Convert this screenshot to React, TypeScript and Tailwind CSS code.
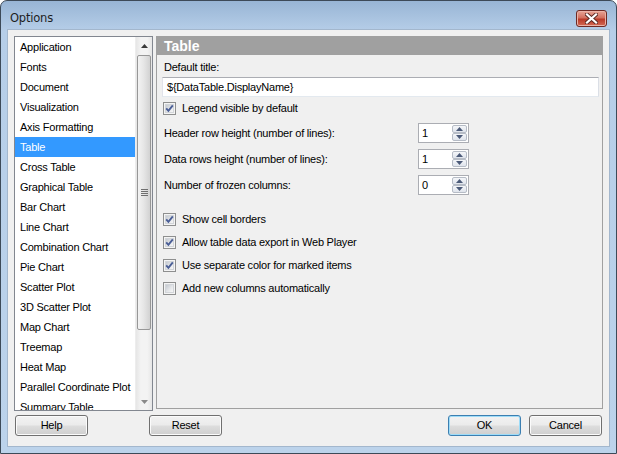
import React from "react";

const items = [
  "Application",
  "Fonts",
  "Document",
  "Visualization",
  "Axis Formatting",
  "Table",
  "Cross Table",
  "Graphical Table",
  "Bar Chart",
  "Line Chart",
  "Combination Chart",
  "Pie Chart",
  "Scatter Plot",
  "3D Scatter Plot",
  "Map Chart",
  "Treemap",
  "Heat Map",
  "Parallel Coordinate Plot",
  "Summary Table",
];

function Check({ checked }: { checked: boolean }) {
  return (
    <span className="relative block w-[13px] h-[13px] shrink-0 border border-[#8e8f8f] bg-[#f4f4f4]">
      <span className="absolute left-[1px] top-[1px] w-[9px] h-[9px] bg-[linear-gradient(135deg,#c4c9d0_0%,#e4e6e9_55%,#f6f6f6_100%)] border border-[#d2d5d9]" />
      {checked && (
        <svg className="absolute left-0 top-0" width="11" height="11" viewBox="0 0 11 11">
          <polyline points="2.2,5.3 4.4,7.8 8.8,2.4" fill="none" stroke="#4a5e96" strokeWidth="1.9" />
        </svg>
      )}
    </span>
  );
}

function CheckRow({ checked, label, className = "" }: { checked: boolean; label: string; className?: string }) {
  return (
    <div className={`flex items-center h-[23px] pl-[1px] ${className}`}>
      <Check checked={checked} />
      <span className="ml-[6px]">{label}</span>
    </div>
  );
}

function Spin({ value }: { value: string }) {
  return (
    <div className="flex w-[51px] h-[20px] border border-[#abadb3] bg-white">
      <div className="flex-1 pl-[3px] leading-[18px]">{value}</div>
      <div className="w-[16px] flex flex-col py-[1px] pr-[1px]">
        <div className="flex-1 flex items-center justify-center border border-[#b6bcc6] rounded-[2px] bg-[linear-gradient(#f4f6f9,#dfe4ec)]">
          <svg width="7" height="4" viewBox="0 0 7 4">
            <polygon points="0,4 7,4 3.5,0" fill="#4b5a78" />
          </svg>
        </div>
        <div className="flex-1 flex items-center justify-center border border-[#b6bcc6] rounded-[2px] bg-[linear-gradient(#f4f6f9,#dfe4ec)]">
          <svg width="7" height="4" viewBox="0 0 7 4">
            <polygon points="0,0 7,0 3.5,4" fill="#4b5a78" />
          </svg>
        </div>
      </div>
    </div>
  );
}

function SpinRow({ label, value, className = "" }: { label: string; value: string; className?: string }) {
  return (
    <div className={`flex items-center h-[20px] ${className}`}>
      <span className="w-[256px] pl-[2px]">{label}</span>
      <Spin value={value} />
    </div>
  );
}

function Btn({ children, def = false, className = "" }: { children: React.ReactNode; def?: boolean; className?: string }) {
  return (
    <div
      className={`w-[73px] h-[21px] rounded-[3px] border flex items-center justify-center bg-[linear-gradient(#f2f2f2_0%,#ebebeb_48%,#dddddd_52%,#cfcfcf_100%)] ${
        def ? "border-[#3c7fb1] shadow-[inset_0_0_0_1px_#9edcf8]" : "border-[#707070] shadow-[inset_0_0_0_1px_#fbfbfb]"
      } ${className}`}
    >
      {children}
    </div>
  );
}

export default function App() {
  return (
    <div className="w-[617px] h-[454px] font-['Liberation_Sans',Arial,sans-serif] text-[11px] tracking-[-0.22px] text-black">
      <div className="w-[617px] h-[454px] flex flex-col rounded-t-[7px] border border-[#3d4a58] bg-[linear-gradient(#98b5d5_0px,#b6cee8_30px,#bcd3eb_100%)] overflow-hidden">
        {/* Title bar */}
        <div className="h-[28px] flex items-start justify-between pt-[9px] pl-[9px] pr-[9px] shrink-0">
          <span className="leading-[16px] font-['DejaVu_Sans',sans-serif] text-[11.5px] tracking-[-0.2px] text-[#1e1e1e]">Options</span>
          <div className="w-[31px] h-[17px] rounded-[3px] border border-[#6e2a24] bg-[linear-gradient(#e8a597_0%,#d3705f_45%,#b93a28_55%,#d46a55_100%)] flex items-center justify-center shadow-[inset_0_0_0_1px_#eab2a6]">
            <svg width="13" height="11" viewBox="0 0 13 11">
              <path d="M2 1.5 L11 9.5 M11 1.5 L2 9.5" stroke="#5a2a24" strokeWidth="4" strokeLinecap="square" />
              <path d="M2 1.5 L11 9.5 M11 1.5 L2 9.5" stroke="#ffffff" strokeWidth="2.2" strokeLinecap="square" />
            </svg>
          </div>
        </div>
        {/* Content */}
        <div className="px-[6px] shrink-0">
          <div className="h-[418px] border border-[#a3b7cd] bg-[#f0f0f0] flex flex-col">
            <div className="flex pt-[6px] pl-[6px] pr-[6px] items-start">
              {/* List */}
              <div className="w-[139px] h-[375px] border border-[#828790] bg-white flex overflow-hidden">
                <div className="flex-1 overflow-hidden">
                  {items.map((it) => (
                    <div
                      key={it}
                      className={`h-[20px] leading-[20px] pl-[5px] whitespace-nowrap ${
                        it === "Table" ? "bg-[#3399ff] text-white" : ""
                      }`}
                    >
                      {it}
                    </div>
                  ))}
                </div>
                {/* Scrollbar */}
                <div className="w-[17px] h-full flex flex-col bg-[linear-gradient(90deg,#e6e6e6,#f3f3f3_30%,#f3f3f3_70%,#e6e6e6)] border-l border-[#ededed]">
                  <div className="h-[17px] flex items-center justify-center">
                    <svg width="7" height="4" viewBox="0 0 7 4">
                      <polygon points="0,4 7,4 3.5,0" fill="#3a3a3a" />
                    </svg>
                  </div>
                  <div className="mx-[1px] mt-[1px] h-[275px] rounded-[2px] border border-[#979797] bg-[linear-gradient(90deg,#f3f3f3,#e5e5e5_50%,#d2d2d2)] flex items-center justify-center">
                    <div className="flex flex-col gap-[1px]">
                      <div className="w-[7px] h-[1px] bg-[#6f6f6f]" />
                      <div className="w-[7px] h-[1px] bg-[#6f6f6f]" />
                      <div className="w-[7px] h-[1px] bg-[#6f6f6f]" />
                      <div className="w-[7px] h-[1px] bg-[#6f6f6f]" />
                    </div>
                  </div>
                  <div className="flex-1" />
                  <div className="h-[17px] flex items-center justify-center">
                    <svg width="7" height="4" viewBox="0 0 7 4">
                      <polygon points="0,0 7,0 3.5,4" fill="#8a8a8a" />
                    </svg>
                  </div>
                </div>
              </div>
              {/* Panel */}
              <div className="ml-[3px] w-[447px] h-[373px] border border-[#a0a0a0] flex flex-col">
                <div className="h-[18px] bg-[#a0a0a0] text-white font-bold text-[14px] tracking-normal leading-[18px] pl-[7px]">Table</div>
                <div className="pl-[5px] pr-[3px] flex flex-col">
                  <div className="mt-[5px] h-[14px] leading-[14px] pl-[2px]">Default title:</div>
                  <div className="mt-[3px] h-[20px] border border-[#abadb3] border-l-[#e2e3ea] border-r-[#dbdfe6] border-b-[#e3e9ef] bg-white leading-[18px] pl-[4px]">
                    {"${DataTable.DisplayName}"}
                  </div>
                  <CheckRow checked label="Legend visible by default" />
                  <SpinRow label="Header row height (number of lines):" value="1" className="mt-[3px]" />
                  <SpinRow label="Data rows height (number of lines):" value="1" className="mt-[6px]" />
                  <SpinRow label="Number of frozen columns:" value="0" className="mt-[6px]" />
                  <CheckRow checked label="Show cell borders" className="mt-[13px]" />
                  <CheckRow checked label="Allow table data export in Web Player" />
                  <CheckRow checked label="Use separate color for marked items" />
                  <CheckRow checked={false} label="Add new columns automatically" />
                </div>
              </div>
            </div>
            {/* Buttons */}
            <div className="flex mt-[4px] pl-[6px]">
              <Btn className="ml-[1px]">Help</Btn>
              <Btn className="ml-[61px]">Reset</Btn>
              <div className="flex-1" />
              <Btn def>OK</Btn>
              <Btn className="ml-[8px] mr-[7px]">Cancel</Btn>
            </div>
          </div>
        </div>
      </div>
    </div>
  );
}
